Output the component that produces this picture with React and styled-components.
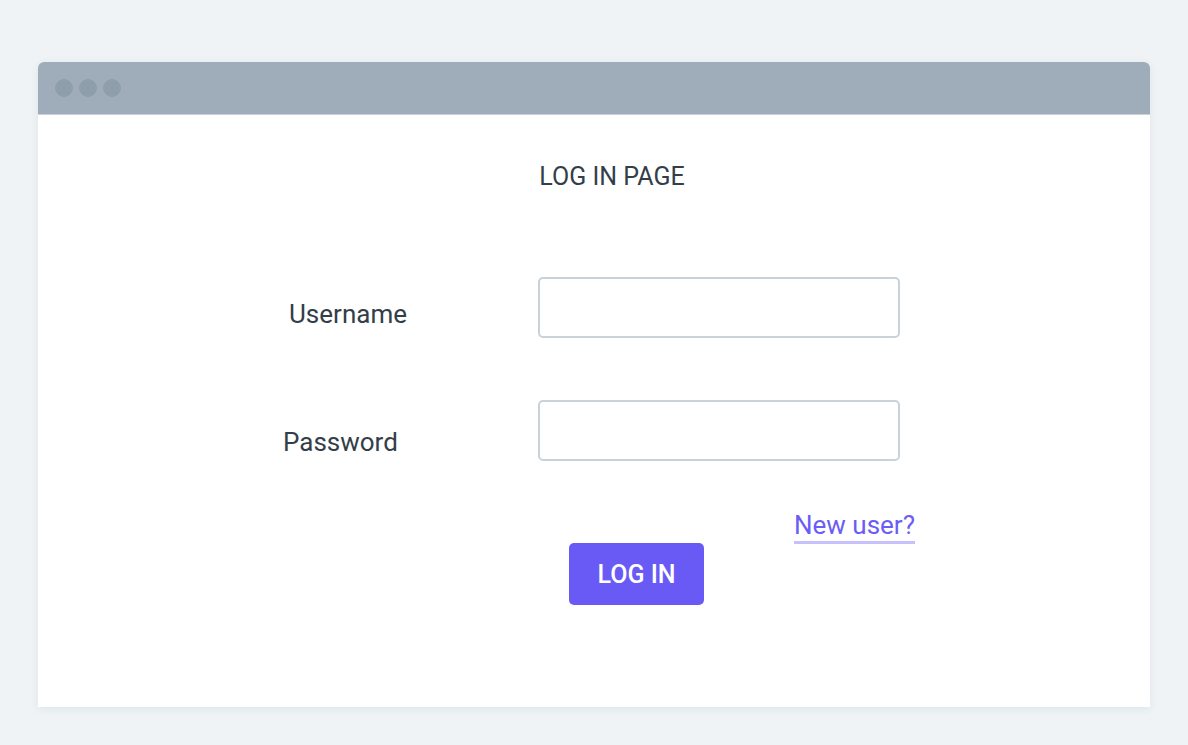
import React from 'react'
import styled, { createGlobalStyle } from 'styled-components'

const Global = createGlobalStyle`
html, body { margin:0; padding:0; background:#eff3f6; }
body { font-family: Roboto, "Noto Sans", "Liberation Sans", sans-serif; color:#333e49; }
`

function App() {
    return (
        <Page>
            <Global />
            <Window>
                <TitleBar>
                    <Dot /><Dot /><Dot />
                </TitleBar>
                <Body>
                    <Title>LOG IN PAGE</Title>
                    <Form>
                        <Label nudgeX={39} nudgeY={6}>Username</Label>
                        <Input type="text" />
                        <Label nudgeX={33} nudgeY={11}>Password</Label>
                        <Input type="password" />
                    </Form>
                    <LinkRow><NewUser href="#">New user?</NewUser></LinkRow>
                    <ButtonRow><LoginBtn>LOG IN</LoginBtn></ButtonRow>
                </Body>
            </Window>
        </Page>
    )
}

export default App

const Page = styled.div`
width:1188px;
height:745px;
padding:62px 38px 0;
box-sizing:border-box;
`
const Window = styled.div`
height:645px;
background:#fff;
border-radius:6px 6px 0 0;
box-shadow:0 2px 8px rgba(40,60,80,0.08);
overflow:hidden;
`
const TitleBar = styled.div`
height:53px;
background:#9eadb9;
display:flex;
align-items:center;
gap:6px;
padding-left:17px;
border-bottom:1px solid #c9d2d9;
box-sizing:border-box;
`
const Dot = styled.span`
width:18px;
height:18px;
border-radius:50%;
background:#8f9eab;
`
const Body = styled.div`
padding-top:47px;
`
const Title = styled.h1`
margin:0;
text-align:center;
font-size:25px;
line-height:30px;
font-weight:400;
padding-left:36px;
`
const Form = styled.div`
margin-top:85px;
display:grid;
grid-template-columns:288px 362px;
row-gap:62px;
padding-left:212px;
align-items:center;
`
const Label = styled.label`
font-size:26px;
font-weight:400;
padding-left:${p => p.nudgeX}px;
transform:translateY(${p => p.nudgeY}px);
`
const Input = styled.input`
height:61px;
box-sizing:border-box;
border:2px solid #c9d1d9;
border-radius:5px;
outline:none;
font-size:18px;
padding:0 12px;
`
const LinkRow = styled.div`
margin-top:51px;
padding-left:756px;
height:32px;
`
const NewUser = styled.a`
display:inline-block;
color:#6a5cf5;
text-decoration:none;
font-size:26px;
line-height:27px;
padding-bottom:2px;
border-bottom:3px solid #c7c1fb;
`
const ButtonRow = styled.div`
padding-left:531px;
margin-top:-1px;
`
const LoginBtn = styled.button`
display:block;
width:135px;
height:62px;
border:none;
border-radius:5px;
background:#6a5af5;
color:#fff;
font-family:inherit;
font-size:25px;
font-weight:500;
cursor:pointer;
`
